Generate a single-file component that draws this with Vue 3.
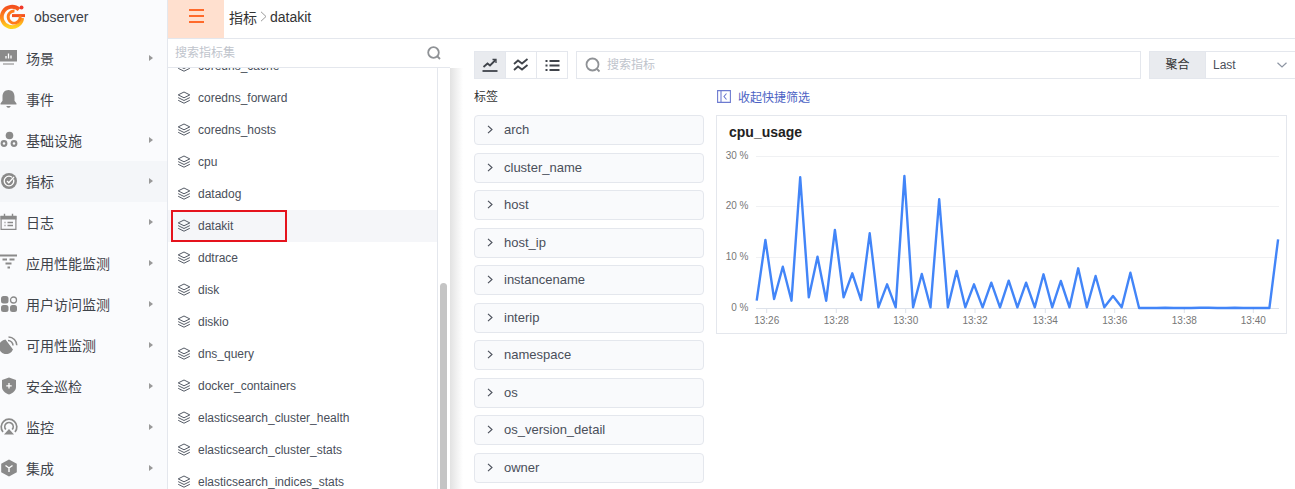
<script setup>
const navItems = [
  { icon: 'scene', label: '场景', arrow: true },
  { icon: 'bell', label: '事件', arrow: false },
  { icon: 'infra', label: '基础设施', arrow: true },
  { icon: 'metric', label: '指标', arrow: true, active: true },
  { icon: 'log', label: '日志', arrow: true },
  { icon: 'apm', label: '应用性能监测', arrow: true },
  { icon: 'rum', label: '用户访问监测', arrow: true },
  { icon: 'dish', label: '可用性监测', arrow: true },
  { icon: 'shield', label: '安全巡检', arrow: true },
  { icon: 'monitor', label: '监控', arrow: true },
  { icon: 'hex', label: '集成', arrow: true }
]

const metricSets = [
  'coredns_cache',
  'coredns_forward',
  'coredns_hosts',
  'cpu',
  'datadog',
  'datakit',
  'ddtrace',
  'disk',
  'diskio',
  'dns_query',
  'docker_containers',
  'elasticsearch_cluster_health',
  'elasticsearch_cluster_stats',
  'elasticsearch_indices_stats'
]

const tags = [
  'arch',
  'cluster_name',
  'host',
  'host_ip',
  'instancename',
  'interip',
  'namespace',
  'os',
  'os_version_detail',
  'owner'
]

// y values of the series, one point every 8.69px starting at x = 756.7
const series = [
  300.7, 240, 299, 266.7, 300.7, 177.3, 297.3, 256.7, 300.7, 230, 297.3, 273.3, 300, 233.3, 307.3,
  284.3, 307.3, 176, 307.3, 274, 307.3, 199.3, 307.3, 271, 307.3, 284.3, 307.3, 282.7, 307.3, 280.7,
  307.3, 282.7, 307.3, 274.3, 307.3, 281, 307.3, 268.3, 307.3, 276, 307.3, 296, 307.3, 272.7, 308,
  308, 308, 307.7, 308, 308, 308, 307.7, 307.7, 308, 308, 307.7, 308, 308, 308, 308, 239.3
]
const seriesPath = series.map((y, i) => `${(756.7 + i * 8.69).toFixed(1)},${y}`).join(' ')

const gridLines = [
  { y: 156.5, label: '30 %' },
  { y: 206.5, label: '20 %' },
  { y: 257.5, label: '10 %' }
]
const timeTicks = [
  { x: 766.7, label: '13:26' },
  { x: 836.3, label: '13:28' },
  { x: 905.7, label: '13:30' },
  { x: 975, label: '13:32' },
  { x: 1045.3, label: '13:34' },
  { x: 1114.7, label: '13:36' },
  { x: 1184.3, label: '13:38' },
  { x: 1253.3, label: '13:40' }
]
</script>

<template>
  <div class="app">
    <aside class="side">
      <div class="brand">
        <svg class="logo" width="26" height="30" viewBox="0 0 26 30">
          <defs>
            <linearGradient id="logoFill" x1="0" y1="0" x2="0" y2="1">
              <stop offset="0" stop-color="#f4511e" />
              <stop offset="0.55" stop-color="#ff8a1c" />
              <stop offset="1" stop-color="#ffd21f" />
            </linearGradient>
          </defs>
          <path d="M19 7.500A10.200 10.200 0 1 0 22.200 16" fill="none" stroke="url(#logoFill)" stroke-width="3.800" />
          <path d="M12 13.600H25" fill="none" stroke="#f4511e" stroke-width="3" />
          <path d="M20 13.600A6 6 0 0 1 8.500 17a6 6 0 0 1 6-8" fill="none" stroke="#ff7a1a" stroke-width="2.800" />
          <circle cx="21.500" cy="5.500" r="2" fill="#f0382a" />
        </svg>
        <span>observer</span>
      </div>
      <nav>
        <div v-for="item in navItems" :key="item.label" class="nav-item" :class="{ active: item.active }">
          <svg class="nav-icon" width="18" height="18" viewBox="0 0 18 18">
            <template v-if="item.icon === 'scene'">
              <path d="M0 1h17v11.500H0z" />
              <path d="M6 9.500V7M8.500 9.500V4.500M11 9.500V6.500" stroke="#fff" stroke-width="1.300" fill="none" />
              <path d="M3 15h11" stroke="#aaa" stroke-width="1.500" fill="none" />
            </template>
            <template v-else-if="item.icon === 'bell'">
              <path d="M8.500 0c3.700 0 6 2.800 6 6.500v4.300l2 2.700v1h-16v-1l2-2.700V6.500C2.500 2.800 4.800 0 8.500 0z" />
              <path d="M6.300 16h4.400c-.3 1.200-1.200 1.800-2.200 1.800S6.600 17.200 6.300 16z" />
            </template>
            <template v-else-if="item.icon === 'infra'">
              <circle cx="9.500" cy="4.500" r="3.800" />
              <circle cx="4" cy="12.500" r="3.400" />
              <circle cx="14" cy="12.500" r="3.400" />
              <circle cx="14" cy="12.500" r="1.200" fill="#fafbfd" />
              <circle cx="4" cy="12.500" r="1.200" fill="#fafbfd" />
            </template>
            <template v-else-if="item.icon === 'metric'">
              <circle cx="9" cy="9" r="8" />
              <circle cx="9" cy="9" r="4.800" fill="none" stroke="#fff" stroke-width="1.300" />
              <path d="M7 9l1.800 1.800L14 5" fill="none" stroke="#8a8a8a" stroke-width="2.600" />
              <path d="M7 9l1.800 1.800L14 5" fill="none" stroke="#fff" stroke-width="1.300" />
            </template>
            <template v-else-if="item.icon === 'log'">
              <path d="M1.100 3.400h14.800v13H1.100z" fill="none" stroke="#8a8a8a" stroke-width="1.200" />
              <path d="M.5 3h16v3.500H.5z" />
              <path d="M4.500 .8v3M12.500 .8v3" stroke="#8a8a8a" stroke-width="1.400" fill="none" />
              <path d="M4.500 9.500h1M7.500 9.500h5.500M4.500 12.500h1M7.500 12.500h5.500" stroke="#8a8a8a" stroke-width="1.300" fill="none" />
            </template>
            <template v-else-if="item.icon === 'apm'">
              <path d="M0 1.500h17M2.500 5.500h4.500M9.500 5.500h5M5.500 9.500h6M7.500 13.500h2.500" stroke="#8a8a8a" stroke-width="1.800" fill="none" />
            </template>
            <template v-else-if="item.icon === 'rum'">
              <rect x="1" y="1" width="7.500" height="7.500" rx="2.500" />
              <circle cx="13.500" cy="5" r="3" fill="none" stroke="#8a8a8a" stroke-width="1.300" />
              <rect x="1" y="10" width="7.500" height="7" rx="2.500" />
              <rect x="10" y="10" width="7" height="7" rx="2.500" />
            </template>
            <template v-else-if="item.icon === 'dish'">
              <path d="M5.500 3.500a7.300 7.300 0 1 0 7.500 10L5.500 3.500z" />
              <path d="M8 4.500a5 5 0 0 1 5 5M8.500 1a8.300 8.300 0 0 1 8.300 8.300" fill="none" stroke="#8a8a8a" stroke-width="1.500" />
            </template>
            <template v-else-if="item.icon === 'shield'">
              <path d="M9 .5l7 2.500v7c0 3.500-3 6-7 7.500C5 16 2 13.500 2 10V3z" />
              <path d="M9 6v5.500M6.300 8.800h5.400" stroke="#fff" stroke-width="1.300" fill="none" />
            </template>
            <template v-else-if="item.icon === 'monitor'">
              <path d="M3 14a7.800 7.800 0 1 1 12 0" fill="none" stroke="#8a8a8a" stroke-width="1.700" />
              <path d="M5.800 11.500a4.200 4.200 0 1 1 6.400 0" fill="none" stroke="#8a8a8a" stroke-width="1.700" />
              <path d="M9 11l5 5.500H4z" />
            </template>
            <template v-else>
              <path d="M9 .5l7.800 4.300v8.400L9 17.500l-7.800-4.300V4.800z" />
              <path d="M5.500 6.500L9 9l3.500-2.500M9 9v4" stroke="#fff" stroke-width="1.400" fill="none" />
            </template>
          </svg>
          <span class="nav-label">{{ item.label }}</span>
          <i v-if="item.arrow" class="nav-arrow"></i>
        </div>
      </nav>
    </aside>

    <div class="content">
      <header class="top">
        <div class="burger"><i></i><i></i><i></i></div>
        <div class="crumb">
          <span>指标</span>
          <svg width="7" height="11" viewBox="0 0 7 11" fill="none" stroke="#9a9a9a" stroke-width="1">
            <path d="M1 .8L6 5.500 1 10.200" />
          </svg>
          <span>datakit</span>
        </div>
      </header>

      <div class="body">
        <section class="sets">
          <div class="sets-search">
            <input type="text" placeholder="搜索指标集" />
            <svg width="14" height="14" viewBox="0 0 14 14" fill="none" stroke="#8f9296" stroke-width="1.800">
              <circle cx="6.500" cy="6.500" r="5.300" />
              <path d="M10.500 10.500l2.500 2.500" />
            </svg>
          </div>
          <div class="sets-scroll">
            <ul class="sets-list">
              <li v-for="name in metricSets" :key="name" :class="{ active: name === 'datakit' }">
                <svg width="14" height="14" viewBox="0 0 14 14" fill="none" stroke="#555b66" stroke-width="1">
                  <path d="M7 1l5.800 2.900L7 6.800 1.200 3.900z" />
                  <path d="M1.200 6.600L7 9.500l5.800-2.900M1.200 9.300L7 12.200l5.800-2.900" />
                </svg>
                <span>{{ name }}</span>
                <div v-if="name === 'datakit'" class="mark"></div>
              </li>
            </ul>
            <div class="thumb"></div>
          </div>
        </section>

        <main class="main">
          <div class="toolbar">
            <div class="modes">
              <button class="active">
                <svg width="16" height="14" viewBox="0 0 16 14" fill="none" stroke="#3f434a" stroke-width="1.800">
                  <path d="M1.500 9l4-3.500 2.500 2L13.500 2" />
                  <path d="M10.500 1.500h3.500V5" stroke-width="1.300" />
                  <path d="M.5 13h15" />
                </svg>
              </button>
              <button>
                <svg width="16" height="14" viewBox="0 0 16 14" fill="none" stroke="#3f434a" stroke-width="1.800">
                  <path d="M1 6l4-3.500 4 3 5.500-4.500" />
                  <path d="M1 12l4-3.500 4 3L14.500 7" />
                </svg>
              </button>
              <button>
                <svg width="15" height="13" viewBox="0 0 15 13" fill="none" stroke="#3f434a" stroke-width="1.800">
                  <path d="M4.500 2H14.500M4.500 6.500H14.500M4.500 11H14.500" />
                  <path d="M.5 2h2M.5 6.500h2M.5 11h2" />
                </svg>
              </button>
            </div>
            <div class="metric-search">
              <svg width="16" height="16" viewBox="0 0 16 16" fill="none" stroke="#8f9296" stroke-width="1.800">
                <circle cx="7.500" cy="7.500" r="6" />
                <path d="M12 12l2.500 2.500" />
              </svg>
              <input type="text" placeholder="搜索指标" />
            </div>
            <div class="aggregate">
              <span class="agg-label">聚合</span>
              <div class="agg-select">
                <span>Last</span>
                <svg width="10" height="6" viewBox="0 0 10 6" fill="none" stroke="#8d95a3" stroke-width="1.200">
                  <path d="M.5 .8L5 5l4.500-4.200" />
                </svg>
              </div>
            </div>
          </div>

          <div class="columns">
            <div class="tag-col">
              <h4>标签</h4>
              <div v-for="tag in tags" :key="tag" class="tag-row">
                <svg width="6" height="9" viewBox="0 0 6 9" fill="none" stroke="#4a4f5a" stroke-width="1.100">
                  <path d="M1 .8L5 4.500 1 8.200" />
                </svg>
                <span>{{ tag }}</span>
              </div>
            </div>

            <div class="chart-col">
              <div class="collapse">
                <svg width="14" height="13" viewBox="0 0 14 13" fill="none" stroke="#6d7bd0" stroke-width="1.100">
                  <path d="M.6 .6h12.800v11.800H.6zM4 .6v11.800" />
                  <path d="M9.500 3.500L7 6.500l2.500 3" />
                </svg>
                <span>收起快捷筛选</span>
              </div>
              <div class="card">
                <h3>cpu_usage</h3>
                <svg class="chart" width="569" height="185" viewBox="717 148 569 185">
                  <line v-for="g in gridLines" :key="g.y" x1="756" x2="1279" :y1="g.y" :y2="g.y" stroke="#f0f1f3" />
                  <text v-for="g in gridLines" :key="g.label" x="748.500" :y="g.y + 2.500" text-anchor="end" class="axis">{{ g.label }}</text>
                  <text x="748.500" y="310.500" text-anchor="end" class="axis">0 %</text>
                  <line x1="756" x2="1279" y1="308.500" y2="308.500" stroke="#dde2ea" />
                  <g v-for="t in timeTicks" :key="t.label">
                    <line :x1="t.x" :x2="t.x" y1="308.500" y2="313" stroke="#dde2ea" />
                    <text :x="t.x" y="324" text-anchor="middle" class="axis">{{ t.label }}</text>
                  </g>
                  <polyline :points="seriesPath" fill="none" stroke="#4285f8" stroke-width="2.400" stroke-linejoin="round" />
                </svg>
              </div>
            </div>
          </div>
        </main>
      </div>
    </div>
  </div>
</template>

<style scoped>
.app {
  display: flex;
  height: 489px;
  overflow: hidden;
  background: #fff;
  color: #333;
  font-family: "Liberation Sans", "Noto Sans CJK SC", sans-serif;
}

.side {
  flex: 0 0 167px;
  background: #fafbfd;
  border-right: 1px solid #e4e7ed;
}

.brand {
  display: flex;
  align-items: center;
  height: 37.500px;
  padding-bottom: 3px;
  box-sizing: border-box;
  font-size: 14px;
  color: #3a3f48;
}

.logo {
  margin: 0 8px 0 0;
}

.nav-item {
  display: flex;
  align-items: center;
  height: 41px;
  font-size: 14px;
  color: #3f434a;
}

.nav-item.active {
  background: #f4f6f9;
}

.nav-icon {
  flex: none;
  margin: 0 8px 0 0;
  fill: #8a8a8a;
}

.nav-label {
  flex: 1;
}

.nav-arrow {
  width: 0;
  height: 0;
  margin-right: 14px;
  border-left: 4px solid #999;
  border-top: 3px solid transparent;
  border-bottom: 3px solid transparent;
}

.content {
  flex: 1;
  display: flex;
  flex-direction: column;
  min-width: 0;
}

.top {
  flex: 0 0 39px;
  display: flex;
  border-bottom: 1px solid #e4e7ed;
  box-sizing: border-box;
}

.burger {
  flex: 0 0 56px;
  display: flex;
  flex-direction: column;
  align-items: center;
  justify-content: center;
  gap: 4px;
  height: 38px;
  padding-bottom: 6px;
  box-sizing: border-box;
  background: #ffe0cf;
}

.burger i {
  width: 15px;
  height: 2px;
  background: #ff6a2b;
}

.crumb {
  display: flex;
  align-items: center;
  gap: 3px;
  height: 33px;
  margin-left: 5px;
  font-size: 14px;
  color: #333;
}

.body {
  flex: 1;
  display: flex;
  min-height: 0;
}

.sets {
  flex: 0 0 282px;
  display: flex;
  flex-direction: column;
}

.sets-search {
  flex: 0 0 29px;
  display: flex;
  align-items: center;
  box-sizing: border-box;
  padding: 0 9px 0 7px;
  border-bottom: 1px solid #e4e7ed;
}

.sets-search input {
  flex: 1;
  min-width: 0;
}

input {
  padding: 0;
  border: 0;
  outline: 0;
  background: transparent;
  font-family: inherit;
  font-size: 12px;
}

input::placeholder {
  color: #c0c4cc;
}

.sets-scroll {
  position: relative;
  flex: 1;
  overflow: hidden;
}

.sets-list {
  width: 270px;
  box-sizing: border-box;
  margin: -18px 0 0;
  padding: 0;
  list-style: none;
  border-right: 1px solid #e4e7ed;
}

.sets-list li {
  position: relative;
  display: flex;
  align-items: center;
  height: 32px;
  padding-left: 9px;
  font-size: 12px;
  color: #4a4f5a;
}

.sets-list li span {
  margin-left: 7px;
}

.sets-list li.active {
  background: #f5f6f9;
}

.mark {
  position: absolute;
  left: 3px;
  top: 0;
  width: 116px;
  height: 32px;
  box-sizing: border-box;
  border: 2px solid #e5131d;
}

.thumb {
  position: absolute;
  left: 272px;
  top: 215px;
  width: 7px;
  height: 260px;
  border-radius: 4px 4px 0 0;
  background: #c4c4c4;
}

.main {
  flex: 1;
  min-width: 0;
  padding: 12px 8px 0 24px;
  overflow: hidden;
  background: linear-gradient(to right, #e2e2e2, #fff) 0 29px / 13px 100% no-repeat;
}

.toolbar {
  display: flex;
  height: 28px;
  margin-right: -20px;
}

.modes {
  display: flex;
}

.modes button {
  display: flex;
  align-items: center;
  justify-content: center;
  width: 32px;
  height: 28px;
  padding: 0;
  margin-left: -1px;
  background: #fff;
  border: 1px solid #e4e7ed;
}

.modes button:first-child {
  margin-left: 0;
}

.modes button.active {
  background: #e9ebef;
}

.metric-search {
  flex: 1;
  display: flex;
  align-items: center;
  gap: 6px;
  margin: 0 8px;
  padding-left: 8px;
  box-sizing: border-box;
  border: 1px solid #e4e7ed;
}

.metric-search input {
  flex: 1;
}

.aggregate {
  flex: 0 0 158px;
  display: flex;
  box-sizing: border-box;
  border: 1px solid #e4e7ed;
  font-size: 12px;
}

.agg-label {
  flex: 0 0 55px;
  line-height: 26px;
  text-align: center;
  background: #e9ebef;
  border-right: 1px solid #e4e7ed;
}

.agg-select {
  flex: 1;
  display: flex;
  align-items: center;
  justify-content: space-between;
  padding: 0 19px 0 7px;
  color: #4a4f5a;
}

.columns {
  display: grid;
  grid-template-columns: 230px 1fr;
  gap: 12px;
}

h4 {
  height: 36px;
  margin: 0;
  line-height: 36px;
  font-size: 12px;
  font-weight: 400;
  color: #333;
}

.tag-row {
  display: flex;
  align-items: center;
  height: 30px;
  box-sizing: border-box;
  margin-bottom: 7.500px;
  padding: 0 0 1px 12px;
  background: #f9fafc;
  border: 1px solid #e4e7ed;
  border-radius: 4px;
  font-size: 13px;
  color: #4a4f5a;
}

.tag-row span {
  margin-left: 11px;
}

.collapse {
  display: flex;
  align-items: center;
  gap: 7px;
  height: 36px;
  padding: 0 0 2px 1px;
  box-sizing: border-box;
  font-size: 12px;
  color: #4c63c4;
}

.card {
  height: 219px;
  box-sizing: border-box;
  border: 1px solid #e4e7ed;
}

.card h3 {
  height: 32px;
  margin: 0;
  padding-left: 12px;
  line-height: 32px;
  font-size: 14px;
  font-weight: 700;
  color: #222;
}

.chart {
  display: block;
}

.axis {
  font-size: 10px;
  fill: #777;
}
</style>
